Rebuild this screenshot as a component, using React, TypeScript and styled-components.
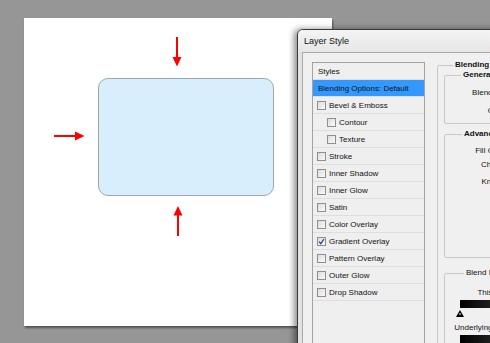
import React from "react";
import styled, { createGlobalStyle } from "styled-components";

const Global = createGlobalStyle`
  html, body { margin: 0; padding: 0; }
  body {
    width: 490px; height: 343px; overflow: hidden; background: #969696;
    font-family: "Liberation Sans", Arial, sans-serif; color: #111;
  }
`;

const Stage = styled.div`
  position: relative;
  width: 490px;
  height: 343px;
  overflow: hidden;
  background: #969696;
  padding: 18px 0 0 24px;
  box-sizing: border-box;
`;

const Canvas = styled.div`
  position: relative;
  width: 308px;
  height: 308px;
  background: #fff;
  box-shadow: 1px 2px 2px rgba(0, 0, 0, 0.45);
`;

const Shape = styled.div`
  position: absolute;
  left: 74px;
  top: 60px;
  width: 176px;
  height: 118px;
  box-sizing: border-box;
  background: #d9eefd;
  border: 1px solid #9ea6ae;
  border-radius: 10px;
`;

const ArrowSvg = styled.svg<{ $x: number; $y: number }>`
  position: absolute;
  left: ${(p) => p.$x}px;
  top: ${(p) => p.$y}px;
  overflow: visible;
`;

const Dialog = styled.div`
  position: absolute;
  left: 297px;
  top: 29px;
  width: 330px;
  height: 340px;
  background: #e2e2e2;
  border: 1px solid #3a3a3a;
  border-radius: 6px 6px 0 0;
  box-shadow: -3px 0 6px rgba(0, 0, 0, 0.45);
  display: flex;
  flex-direction: column;
  overflow: hidden;
`;

const TitleBar = styled.div`
  flex: none;
  height: 22px;
  padding-left: 6px;
  display: flex;
  align-items: center;
  font-size: 9px;
  color: #111;
  background: linear-gradient(#f4f4f4, #e6e6e6);
`;

const Client = styled.div`
  flex: 1;
  min-height: 0;
  margin-left: 4px;
  background: #f0f0f0;
  border-top: 1px solid #a8a8a8;
  border-left: 1px solid #a8a8a8;
  padding: 9px 0 0 9px;
  display: grid;
  grid-template-columns: 113px 1fr;
  column-gap: 12px;
  align-items: start;
  font-size: 8px;
`;

const StyleList = styled.div`
  height: 300px;
  box-sizing: border-box;
  border: 1px solid #a3a3a3;
  background: #efefef;
  display: flex;
  flex-direction: column;
`;

const Row = styled.div<{ $indent?: number; $selected?: boolean }>`
  flex: none;
  height: 16px;
  border-bottom: 1px solid #dedede;
  display: flex;
  align-items: center;
  gap: 3px;
  padding-left: ${(p) => p.$indent ?? 4}px;
  background: ${(p) => (p.$selected ? "#3399ff" : "transparent")};
  color: #111;
  white-space: nowrap;
`;

const Box = styled.span`
  width: 9px;
  height: 9px;
  box-sizing: border-box;
  border: 1px solid #8f8f8f;
  background: linear-gradient(135deg, #dcdcdc, #fafafa);
  display: inline-flex;
  align-items: center;
  justify-content: center;
  flex: none;
`;

const Right = styled.div`
  margin-top: -2px;
`;

const Group = styled.fieldset<{ $pad?: string; $minH?: number }>`
  margin: 0;
  padding: ${(p) => p.$pad ?? "0 0 0 5px"};
  border: 1px solid #c8c8c8;
  border-radius: 2px;
  min-width: 0;
  min-height: ${(p) => p.$minH ?? 0}px;
  box-sizing: border-box;
`;

const Outer = styled(Group)`
  width: 320px;
  height: 320px;
  padding: 0 0 0 6px;
`;

const Legend = styled.legend<{ $ml: number; $bold?: boolean }>`
  padding: 0 2px;
  margin-left: ${(p) => p.$ml}px;
  font-weight: ${(p) => (p.$bold === false ? "normal" : "bold")};
  font-size: 8px;
  line-height: 10px;
`;

const Field = styled.div<{ $h: number }>`
  height: ${(p) => p.$h}px;
  display: flex;
  align-items: center;
`;

const Label = styled.span`
  width: 67px;
  text-align: right;
  white-space: nowrap;
`;

const Spacer = styled.div<{ $h: number }>`
  height: ${(p) => p.$h}px;
`;

const BarWrap = styled.div`
  position: relative;
  margin-left: 10px;
  width: 256px;
  height: 8px;
  background: linear-gradient(90deg, #000, #fff);
`;

const Handle = styled.svg`
  position: absolute;
  left: -4px;
  top: 10px;
`;

const styles: { name: string; indent?: boolean; checked?: boolean }[] = [
  { name: "Bevel & Emboss" },
  { name: "Contour", indent: true },
  { name: "Texture", indent: true },
  { name: "Stroke" },
  { name: "Inner Shadow" },
  { name: "Inner Glow" },
  { name: "Satin" },
  { name: "Color Overlay" },
  { name: "Gradient Overlay", checked: true },
  { name: "Pattern Overlay" },
  { name: "Outer Glow" },
  { name: "Drop Shadow" },
];

export default function App() {
  return (
    <>
      <Global />
      <Stage>
        <Canvas>
          <Shape />
          <ArrowSvg $x={148} $y={19} width={10} height={30} viewBox="0 0 10 30">
            <line x1="5" y1="0" x2="5" y2="22" stroke="#ff0000" strokeWidth="2" />
            <polygon points="0.5,20 9.5,20 5,29.5" fill="#ff0000" />
          </ArrowSvg>
          <ArrowSvg $x={30} $y={113} width={31} height={10} viewBox="0 0 31 10">
            <line x1="0" y1="5" x2="23" y2="5" stroke="#ff0000" strokeWidth="2" />
            <polygon points="21,0.5 21,9.5 30.5,5" fill="#ff0000" />
          </ArrowSvg>
          <ArrowSvg $x={149} $y={188} width={10} height={30} viewBox="0 0 10 30">
            <line x1="5" y1="8" x2="5" y2="30" stroke="#ff0000" strokeWidth="2" />
            <polygon points="5,0 0.5,9.5 9.5,9.5" fill="#ff0000" />
          </ArrowSvg>
        </Canvas>
        <Dialog>
          <TitleBar>Layer Style</TitleBar>
          <Client>
            <StyleList>
              <Row $indent={5}>Styles</Row>
              <Row $indent={5} $selected>Blending Options: Default</Row>
              {styles.map((s) => (
                <Row key={s.name} $indent={s.indent ? 14 : 4}>
                  <Box>
                    {s.checked && (
                      <svg width="7" height="7" viewBox="0 0 7 7">
                        <path d="M1 3.6 L2.8 5.6 L6 1" fill="none" stroke="#2b4486" strokeWidth="1.3" />
                      </svg>
                    )}
                  </Box>
                  {s.name}
                </Row>
              ))}
            </StyleList>
            <Right>
              <Outer as="fieldset">
                <Legend $ml={9}>Blending Options</Legend>
                <Group $pad="3px 0 4px 5px">
                  <Legend $ml={11}>General Blending</Legend>
                  <Field $h={18}><Label>Blend Mode:</Label></Field>
                  <Field $h={18}><Label>Opacity:</Label></Field>
                </Group>
                <Spacer $h={5} />
                <Group $pad="4px 0 0 5px" $minH={129}>
                  <Legend $ml={12}>Advanced Blending</Legend>
                  <Field $h={14}><Label>Fill Opacity:</Label></Field>
                  <Field $h={14}><Label>Channels:</Label></Field>
                  <Field $h={20}><Label>Knockout:</Label></Field>
                </Group>
                <Spacer $h={10} />
                <Group $pad="6px 0 0 5px" $minH={90}>
                  <Legend $ml={14} $bold={false}>Blend If:</Legend>
                  <Field $h={16}><Label>This Layer:</Label></Field>
                  <BarWrap>
                    <Handle width="8" height="7" viewBox="0 0 8 7">
                      <polygon points="4,0 8,7 0,7" fill="#000" />
                      <rect x="3.5" y="3" width="1" height="2" fill="#fff" />
                    </Handle>
                  </BarWrap>
                  <Spacer $h={11} />
                  <Field $h={16}><Label>Underlying Layer:</Label></Field>
                  <BarWrap />
                </Group>
              </Outer>
            </Right>
          </Client>
        </Dialog>
      </Stage>
    </>
  );
}
